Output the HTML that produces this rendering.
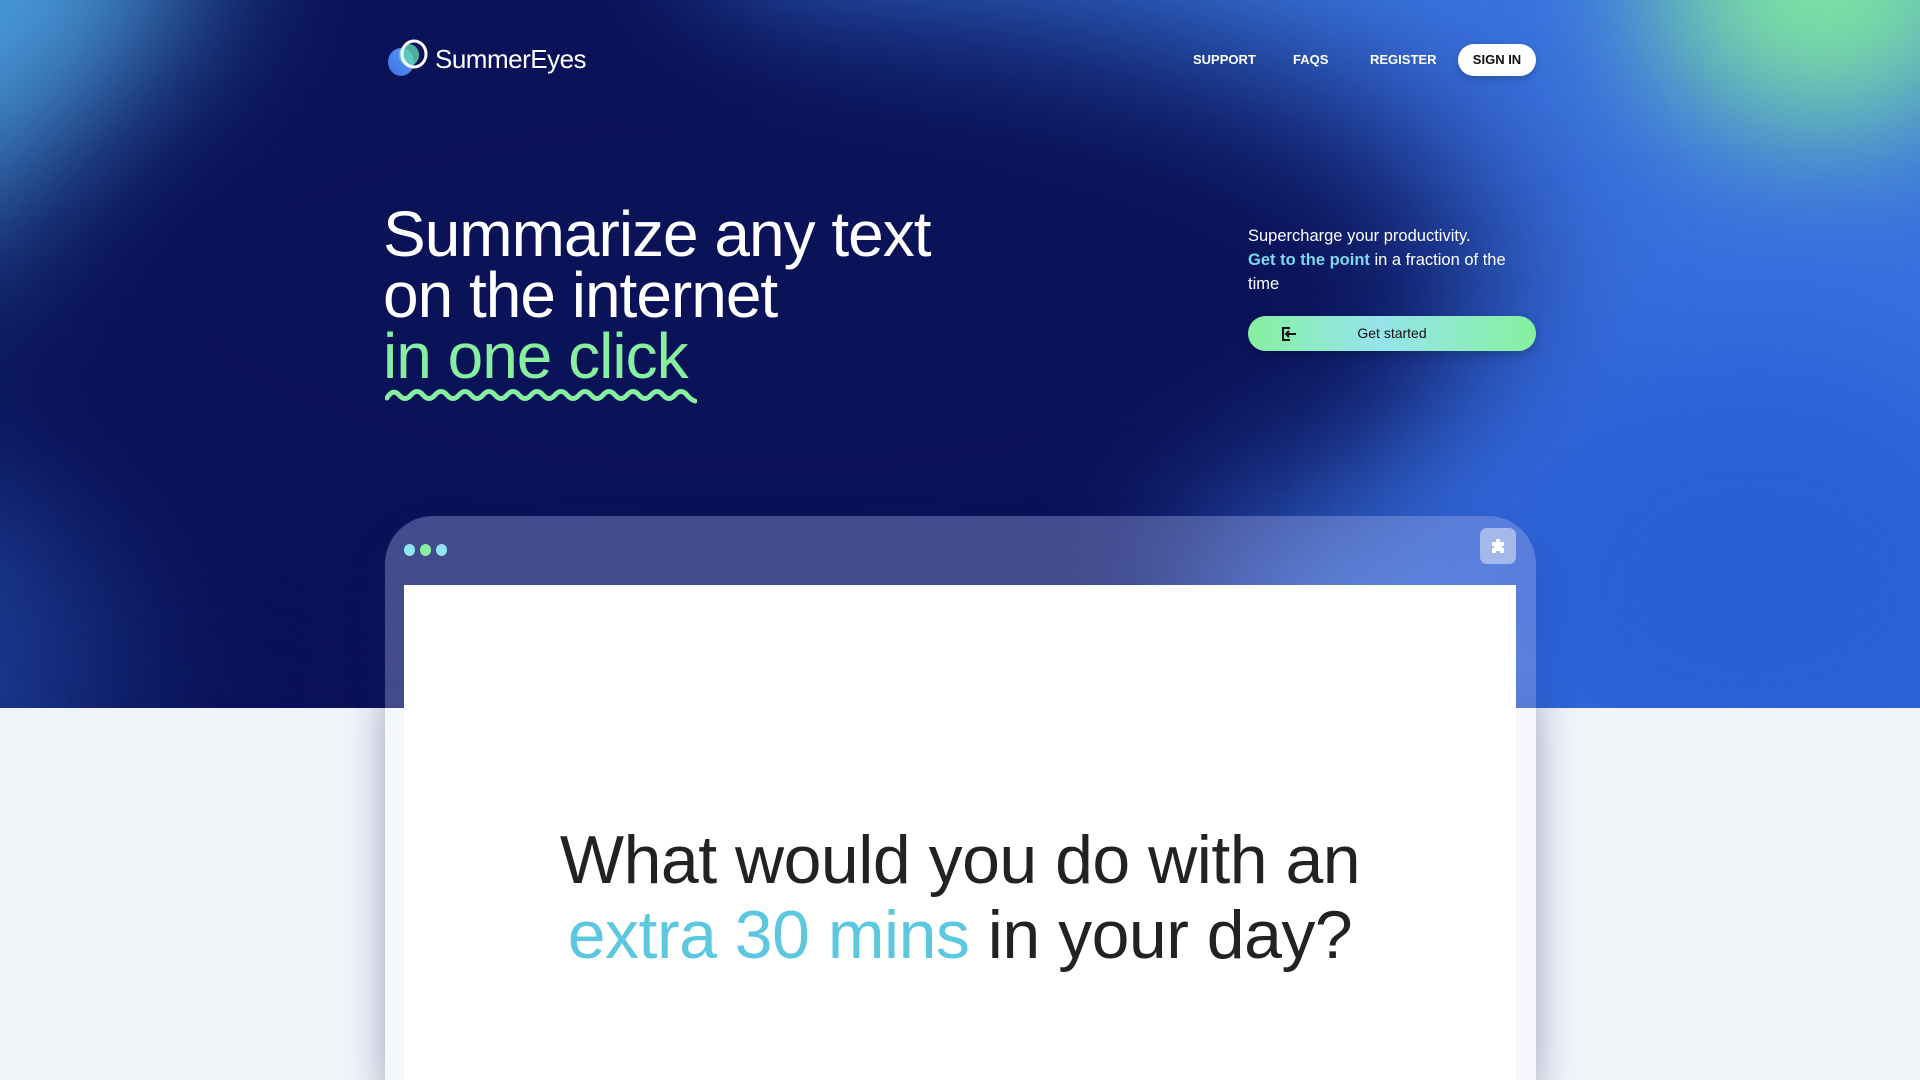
<!DOCTYPE html>
<html><head><meta charset="utf-8"><style>
*{margin:0;padding:0;box-sizing:border-box}
html,body{width:1920px;height:1080px;overflow:hidden}
body{background:#f0f3f8;font-family:"Liberation Sans",sans-serif;position:relative}
.hero{position:absolute;left:0;top:0;width:1920px;height:708px;background:#0a1258;overflow:hidden}
.blob{position:absolute;border-radius:50%;filter:blur(70px)}
.abs{position:absolute}
.nav{color:#fff;font-weight:bold;font-size:13px;top:52px}
</style></head><body>
<div class="hero">
  <div class="blob" style="left:700px;top:-400px;width:1500px;height:700px;background:#3d7fe6"></div>
  <div class="blob" style="left:1150px;top:-100px;width:1000px;height:1000px;background:#3a72e0"></div>
  <div class="blob" style="left:1650px;top:-150px;width:350px;height:280px;background:#7fe3a0"></div>
  <div class="blob" style="left:-250px;top:-250px;width:450px;height:500px;background:#4a9ad8;filter:blur(90px)"></div>
  <div class="blob" style="left:-200px;top:450px;width:300px;height:400px;background:#1d3f95;filter:blur(90px)"></div>
  <div class="blob" style="left:0px;top:-30px;width:1500px;height:650px;background:#0a1258;filter:blur(90px)"></div>
  <div class="blob" style="left:1450px;top:330px;width:600px;height:500px;background:#2b5fd6;filter:blur(80px)"></div>
</div>
<svg class="abs" style="left:385px;top:36px" width="48" height="48" viewBox="0 0 48 48">
  <defs><linearGradient id="g" x1="0" y1="1" x2="1" y2="0"><stop offset="0" stop-color="#3f6fe8"/><stop offset="1" stop-color="#5aa0f0"/></linearGradient></defs>
  <ellipse cx="16" cy="26" rx="13" ry="14" fill="url(#g)"/>
  <ellipse cx="24" cy="19" rx="10" ry="11" fill="#5fd6b0" opacity=".8"/>
  <ellipse cx="29" cy="18" rx="12" ry="13" fill="none" stroke="#fff" stroke-width="3"/>
</svg>
<div class="abs" style="left:435px;top:44px;color:#fff;font-size:26px;letter-spacing:-0.5px">SummerEyes</div>
<div class="abs nav" style="left:1193px">SUPPORT</div>
<div class="abs nav" style="left:1293px">FAQS</div>
<div class="abs nav" style="left:1370px">REGISTER</div>
<div class="abs" style="left:1458px;top:44px;width:78px;height:32px;border-radius:16px;background:#fff;color:#111;font-weight:bold;font-size:13px;text-align:center;line-height:32px;box-shadow:0 3px 8px rgba(0,0,0,.2)">SIGN IN</div>
<div class="abs" style="left:383px;top:204px;color:#fff;font-size:64px;line-height:61px;letter-spacing:-1px">Summarize any text<br>on the internet<br><span style="color:#86f0a0">in one click</span></div>
<svg class="abs" style="left:385px;top:386px" width="312" height="18" viewBox="0 0 312 18"><path d="M2 12 Q8 2 14 9 T26 9 T38 9 T50 9 T62 9 T74 9 T86 9 T98 9 T110 9 T122 9 T134 9 T146 9 T158 9 T170 9 T182 9 T194 9 T206 9 T218 9 T230 9 T242 9 T254 9 T266 9 T278 9 T290 9 T302 9 Q306 14 310 15" fill="none" stroke="#86f0a0" stroke-width="5" stroke-linecap="round"/></svg>
<div class="abs" style="left:1248px;top:224px;color:#fff;font-size:16.5px;line-height:24px;width:275px">Supercharge your productivity.<br><b style="color:#7fd8ec;font-weight:bold">Get to the point</b> in a fraction of the time</div>
<div class="abs" style="left:1248px;top:316px;width:288px;height:35px;border-radius:18px;background:linear-gradient(90deg,#86f0a0,#96e4ec 45%,#86f0a0);color:#111;font-size:14px;line-height:35px;text-align:center;box-shadow:0 4px 10px rgba(0,0,0,.2)">Get started</div>
<svg class="abs" style="left:1280px;top:325px" width="18" height="18" viewBox="0 0 18 18"><path d="M10 3H3v12h7M6 9h10M9 6L6 9l3 3" fill="none" stroke="#111" stroke-width="2"/></svg>
<div class="abs" style="left:385px;top:516px;width:1151px;height:600px;border-radius:48px 48px 0 0;background:rgba(160,170,230,.38);box-shadow:0 20px 40px rgba(30,40,100,.2)"></div>
<div class="abs" style="left:385px;top:708px;width:1151px;height:372px;background:#f6f7fb;box-shadow:0 0 30px rgba(60,70,130,.25)"></div>
<div class="abs" style="left:404px;top:544px;width:11px;height:12px;border-radius:50%;background:#8fe6f0"></div>
<div class="abs" style="left:420px;top:544px;width:11px;height:12px;border-radius:50%;background:#86f0a0"></div>
<div class="abs" style="left:436px;top:544px;width:11px;height:12px;border-radius:50%;background:#8fe6f0"></div>
<div class="abs" style="left:1480px;top:528px;width:36px;height:36px;border-radius:7px;background:rgba(255,255,255,.45)"></div>
<svg class="abs" style="left:1489px;top:537px" width="18" height="18" viewBox="0 0 18 18"><path d="M7 2h4v3h4v4h-2v2h2v5h-4v-2H7v2H3v-5h2V9H3V5h4z" fill="#fff"/></svg>
<div class="abs" style="left:404px;top:585px;width:1112px;height:495px;background:#fff"></div>
<div class="abs" style="left:404px;top:823px;width:1112px;text-align:center;color:#222;font-size:68px;line-height:75px;letter-spacing:-0.5px">What would you do with an<br><span style="color:#5bc8e0">extra 30 mins</span> in your day?</div>
</body></html>
